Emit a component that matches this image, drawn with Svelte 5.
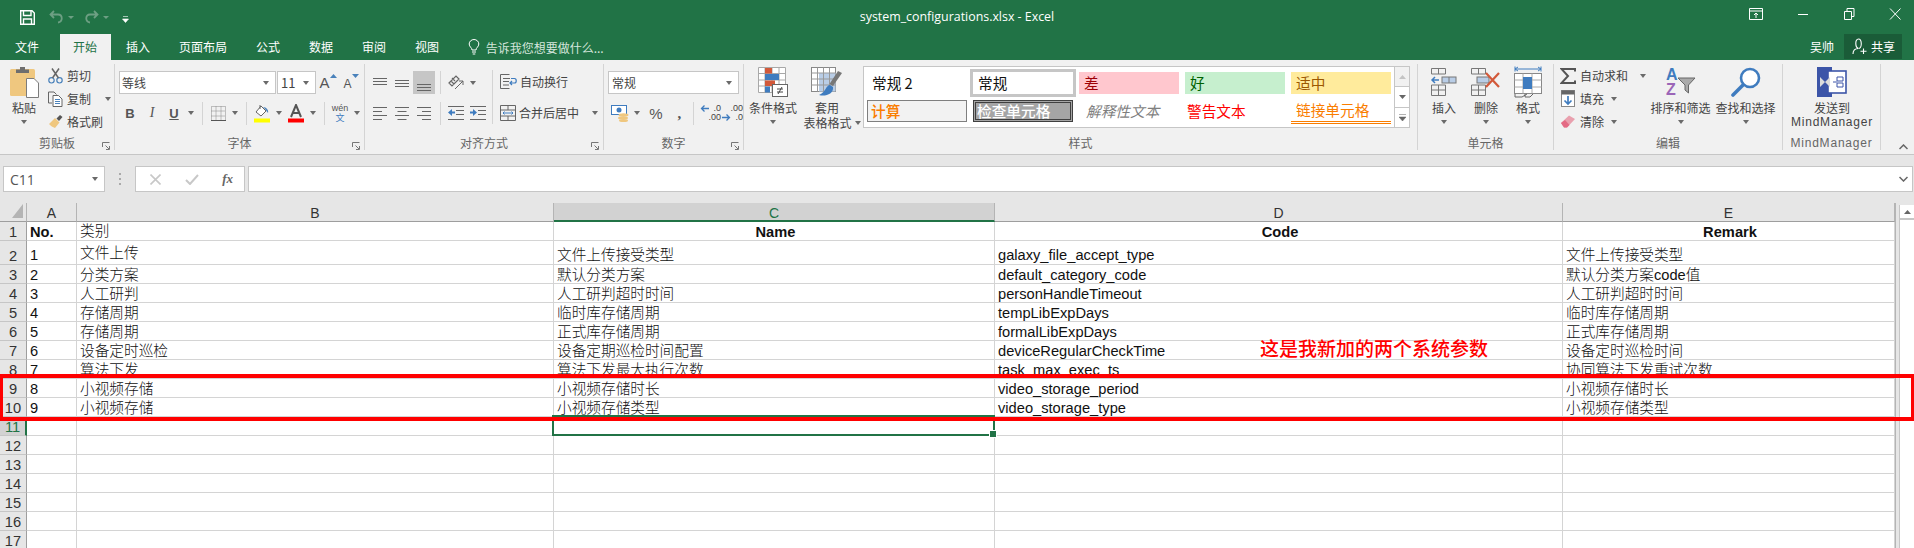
<script>
  const tabs = ["审阅", "视图"];
  const letters = ["A", "B", "C", "D", "E"];
  const rows = [
    ["No.", "类别", "Name", "Code", "Remark"],
    ["1", "文件上传", "文件上传接受类型", "galaxy_file_accept_type", "文件上传接受类型"],
    ["2", "分类方案", "默认分类方案", "default_category_code", "默认分类方案code值"],
    ["3", "人工研判", "人工研判超时时间", "personHandleTimeout", "人工研判超时时间"],
    ["4", "存储周期", "临时库存储周期", "tempLibExpDays", "临时库存储周期"],
    ["5", "存储周期", "正式库存储周期", "formalLibExpDays", "正式库存储周期"],
    ["6", "设备定时巡检", "设备定期巡检时间配置", "deviceRegularCheckTime", "设备定时巡检时间"],
    ["7", "算法下发", "算法下发最大执行次数", "task_max_exec_ts", "协同算法下发重试次数"],
    ["8", "小视频存储", "小视频存储时长", "video_storage_period", "小视频存储时长"],
    ["9", "小视频存储", "小视频存储类型", "video_storage_type", "小视频存储类型"],
    ["", "", "", "", ""],
    ["", "", "", "", ""],
    ["", "", "", "", ""],
    ["", "", "", "", ""],
    ["", "", "", "", ""],
    ["", "", "", "", ""],
    ["", "", "", "", ""]
  ];
</script>

{#snippet launcher()}
  <svg class="launcher" width="8" height="8" viewBox="0 0 8 8"><path d="M.5 5V.5H7.5M3.5 3.5L7 7M7.5 4V7.5H4" fill="none" stroke="#777"/></svg>
{/snippet}

<div class="app">
  <header class="titlebar">
    <div class="qat">
      <svg width="15" height="15" viewBox="0 0 15 15"><path d="M.7.7H12L14.3 3V14.3H.7Z" fill="none" stroke="#fff" stroke-width="1.4"/><path d="M3.5 1V5.5H11V1M3.5 14V9H11.5V14" fill="none" stroke="#fff" stroke-width="1.4"/></svg>
      <svg class="undo" width="15" height="14" viewBox="0 0 15 14"><path d="M5 1L1.5 4.5L5 8M2 4.5H9C14 4.5 14 12 9 12.5" fill="none" stroke="#6d9f83" stroke-width="1.8"/></svg>
      <span class="caret dim"></span>
      <svg class="redo" width="15" height="14" viewBox="0 0 15 14"><path d="M10 1L13.5 4.5L10 8M13 4.5H6C1 4.5 1 12 6 12.5" fill="none" stroke="#6d9f83" stroke-width="1.8"/></svg>
      <span class="caret dim"></span>
      <svg class="custom" width="7" height="7" viewBox="0 0 7 7"><path d="M1 .5H6M.5 3H6.5L3.5 6.5Z" fill="#fff" stroke="#fff" stroke-width=".6"/></svg>
    </div>
    <div class="doc-title">system_configurations.xlsx - Excel</div>
    <div class="winbtns">
      <svg class="first" width="14" height="12" viewBox="0 0 14 12"><path d="M.5.5H13.5V11.5H.5ZM.5 3H13.5M7 10V5M5 7L7 5L9 7" fill="none" stroke="#fff"/></svg>
      <svg width="20" height="12" viewBox="0 0 20 12"><path d="M5 6.5H15" stroke="#fff"/></svg>
      <svg width="20" height="12" viewBox="0 0 20 12"><path d="M5.5 3.5H12.5V11.5H5.5ZM8 3V.5H15V8.5H13" fill="none" stroke="#fff"/></svg>
      <svg width="20" height="12" viewBox="0 0 20 12"><path d="M5 .5L15.5 11.5M15.5 .5L5 11.5" stroke="#fff"/></svg>
    </div>
  </header>

  <nav class="tabbar">
    <span class="tab file">文件</span>
    <span class="tab active">开始</span>
    <span class="tab after">插入</span>
    <span class="tab">页面布局</span>
    <span class="tab">公式</span>
    <span class="tab">数据</span>
    {#each tabs as t}
      <span class="tab">{t}</span>
    {/each}
    <span class="tellme">
      <svg width="12" height="16" viewBox="0 0 12 16"><path d="M4 11C4 8.5 1.2 8 1.2 5A4.8 4.5 0 0 1 10.8 5C10.8 8 8 8.5 8 11ZM4 13H8M4.7 15H7.3" fill="none" stroke="#fff"/></svg>
      告诉我您想要做什么...
    </span>
    <span class="user">吴帅</span>
    <span class="share">
      <svg width="15" height="17" viewBox="0 0 15 17"><path d="M1 16C1 12 3 10.5 6.5 10.5C3 9.5 2.8 1 6.5 1C10 1 10.2 9.5 7 10.5M11.5 10.5V16M8.5 13.2H14.5" fill="none" stroke="#fff" stroke-width="1.1"/></svg>
      共享
    </span>
  </nav>

  <section class="ribbon">
    <div class="group g-clip">
      <div class="body">
        <div class="big paste">
          <div class="big-ico">
            <svg width="31" height="32" viewBox="0 0 31 32"><rect x="1" y="3" width="25" height="27" rx="1.5" fill="#efc77f"/><path d="M7 7V3.5H11V1H16V3.5H20V7Z" fill="#6e6e6e"/><path d="M17.5 12.5H25L29.5 17V31.5H17.5Z" fill="#fff" stroke="#7c7c7c"/></svg>
          </div>
          <span class="big-t">粘贴</span>
          <span class="caret big-c"></span>
        </div>
        <div class="stack">
          <div class="mini"><svg width="15" height="16" viewBox="0 0 15 16"><circle cx="3.5" cy="12.3" r="2.7" fill="none" stroke="#4a82bb" stroke-width="1.2"/><circle cx="11.5" cy="12.3" r="2.7" fill="none" stroke="#4a82bb" stroke-width="1.2"/><path d="M4.5 10L11 .5M10.5 10L4 .5" stroke="#666" stroke-width="1.5"/></svg><span>剪切</span></div>
          <div class="mini"><svg width="15" height="16" viewBox="0 0 15 16"><path d="M.5 1H6L8.5 3.5M.5 1V12H4" fill="none" stroke="#666"/><path d="M5 4.5H10.5L14 8V15.5H5Z" fill="#fff" stroke="#666"/><path d="M7 8.5H12M7 10.5H12M7 12.5H12" stroke="#4a82bb"/></svg><span>复制</span><span class="caret copy-c"></span></div>
          <div class="mini"><svg width="15" height="15" viewBox="0 0 15 15"><path d="M1 10L7 4L11.5 8.5L7 14C5 13 2.5 12 1 10Z" fill="#efc77f"/><path d="M8.5 4.5L12 1L14.5 3L11 7Z" fill="#555"/></svg><span>格式刷</span></div>
        </div>
      </div>
      <div class="glabel">剪贴板</div>
      {@render launcher()}
    </div>

    <div class="group g-font">
      <div class="line one">
        <div class="combo fname"><span class="grow">等线</span><span class="caret"></span></div>
        <div class="combo fsize"><span class="grow">11</span><span class="caret"></span></div>
        <span class="grow-a"><b>A</b><svg width="7" height="4" viewBox="0 0 7 4"><path d="M0 4L3.5 0L7 4Z" fill="#4a82bb"/></svg></span>
        <span class="grow-a small"><b>A</b><svg width="7" height="4" viewBox="0 0 7 4"><path d="M0 0L3.5 4L7 0Z" fill="#4a82bb"/></svg></span>
      </div>
      <div class="line two">
        <span class="ib bold">B</span>
        <span class="ib ital">I</span>
        <span class="ib under">U</span>
        <span class="cw"><span class="caret"></span></span>
        <i class="sep"></i>
        <span class="ib"><svg width="15" height="15" viewBox="0 0 15 15"><path d="M.5 .5H14.5V14.5H.5ZM5 .5V14.5M10 .5V14.5M.5 5H14.5M.5 10H14.5" fill="none" stroke="#888" stroke-dasharray="1 1"/><path d="M0 14.5H15" stroke="#555"/></svg></span>
        <span class="cw"><span class="caret"></span></span>
        <i class="sep"></i>
        <span class="ib"><svg width="16" height="19" viewBox="0 0 16 19"><path d="M2 8L7 2L12 7L7 12Z" fill="#fff" stroke="#666"/><path d="M6 1V5" stroke="#666"/><path d="M9 3C12 3 15 6 14 9L11 5Z" fill="#4a82bb"/><rect y="14.5" width="16" height="4" fill="#ffff00"/></svg></span>
        <span class="cw"><span class="caret"></span></span>
        <span class="ib"><svg width="16" height="19" viewBox="0 0 16 19"><path d="M3 13L8 1L13 13M5 9H11" fill="none" stroke="#555" stroke-width="2"/><rect y="14.5" width="16" height="4" fill="#ff0000"/></svg></span>
        <span class="cw"><span class="caret"></span></span>
        <i class="sep"></i>
        <span class="ib wen"><span>wén</span><em>文</em></span>
        <span class="cw"><span class="caret"></span></span>
      </div>
      <div class="glabel">字体</div>
      {@render launcher()}
    </div>

    <div class="group g-align">
      <div class="body">
        <div class="al-left">
          <div class="line one">
            <span class="ib"><svg width="14" height="10" viewBox="0 0 14 10"><path d="M0 .5H14M0 3.5H14M0 6.5H14" stroke="#666"/></svg></span>
            <span class="ib"><svg width="14" height="10" viewBox="0 0 14 10"><path d="M0 2.5H14M0 5.5H14M0 8.5H14" stroke="#666"/></svg></span>
            <span class="ib on"><svg width="14" height="9" viewBox="0 0 14 9"><path d="M0 2.5H14M0 5.5H14M0 8.5H14" stroke="#666"/></svg></span>
            <i class="sep"></i>
            <span class="ib"><svg width="17" height="16" viewBox="0 0 17 16"><path d="M1 8L8 1L11 4L4 11ZM3 6L6 9M4 3L7 6" fill="none" stroke="#666" stroke-width="1.2"/><path d="M7 14L15 6M11 6H15V10" fill="none" stroke="#666"/></svg></span>
            <span class="cw"><span class="caret"></span></span>
          </div>
          <div class="line two">
            <span class="ib"><svg width="14" height="13" viewBox="0 0 14 13"><path d="M0 .5H14M0 4.5H9M0 8.5H14M0 12.5H9" stroke="#666"/></svg></span>
            <span class="ib"><svg width="14" height="13" viewBox="0 0 14 13"><path d="M0 .5H14M2.500 4.500H11.500M0 8.500H14M2.500 12.500H11.500" stroke="#666"/></svg></span>
            <span class="ib"><svg width="14" height="13" viewBox="0 0 14 13"><path d="M0 .5H14M5 4.500H14M0 8.500H14M5 12.500H14" stroke="#666"/></svg></span>
            <i class="sep"></i>
            <span class="ib"><svg width="16" height="14" viewBox="0 0 16 14"><path d="M0 .5H16M8 4.500H16M8 8.500H16M0 13.500H16" stroke="#666"/><path d="M0 6.500L4 3V5.500H7V7.500H4V10Z" fill="#3f7cbf"/></svg></span>
            <span class="ib"><svg width="16" height="14" viewBox="0 0 16 14"><path d="M0 .5H16M8 4.500H16M8 8.500H16M0 13.500H16" stroke="#666"/><path d="M7 6.500L3 3V5.500H0V7.500H3V10Z" fill="#3f7cbf"/></svg></span>
          </div>
        </div>
        <i class="vsep"></i>
        <div class="al-right">
          <div class="mini wrap-row"><svg width="17" height="15" viewBox="0 0 17 15"><path d="M.5 .5H9.500M.5 .5V14.500H9.500M3 4.500H10M3 7.500H9M3 11H9" fill="none" stroke="#666"/><path d="M11 4.500H14.500C16.800 4.500 16.800 9 14.500 9H10M12 7L10 9L12 11" fill="none" stroke="#3f7cbf" stroke-width="1.200"/></svg><span>自动换行</span></div>
          <div class="mini wrap-row"><svg width="16" height="16" viewBox="0 0 16 16"><path d="M.5 .5H15.500V15.500H.5ZM.5 5H15.500M.5 11H15.500M8 .5V5M8 11V15.500" fill="none" stroke="#666"/><path d="M3 8H13M4.500 6.500L3 8L4.500 9.500M11.500 6.500L13 8L11.500 9.500" fill="none" stroke="#3f7cbf"/></svg><span>合并后居中</span><span class="caret merge-c"></span></div>
        </div>
      </div>
      <div class="glabel">对齐方式</div>
      {@render launcher()}
    </div>

    <div class="group g-num">
      <div class="line one"><div class="combo fnum"><span class="grow">常规</span><span class="caret"></span></div></div>
      <div class="line two numrow">
        <span class="curr"><svg width="19" height="17" viewBox="0 0 19 17"><rect x=".5" y=".5" width="15" height="9" fill="#fff" stroke="#3f7cbf"/><circle cx="8" cy="5" r="2.500" fill="#3f7cbf"/><ellipse cx="12.500" cy="10" rx="5" ry="1.700" fill="#efc77f"/><ellipse cx="12" cy="13" rx="5" ry="1.700" fill="#efc77f"/><ellipse cx="12.500" cy="15.500" rx="4.500" ry="1.500" fill="#efc77f"/></svg></span>
        <span class="caret"></span>
        <span class="pct">%</span>
        <span class="comma">,</span>
        <i class="sep"></i>
        <span class="dec"><svg width="9" height="7" viewBox="0 0 9 7"><path d="M9 3.500H2M4.500 .5L1.500 3.500L4.500 6.500" fill="none" stroke="#3f7cbf" stroke-width="1.300"/></svg><b>.0</b><b class="full">.00</b></span>
        <span class="dec"><b class="full">.00</b><svg width="9" height="7" viewBox="0 0 9 7"><path d="M0 3.500H7M4.500 .5L7.500 3.500L4.500 6.500" fill="none" stroke="#3f7cbf" stroke-width="1.300"/></svg><b>.0</b></span>
      </div>
      <div class="glabel">数字</div>
      {@render launcher()}
    </div>

    <div class="group g-styles">
      <div class="body">
        <div class="big cond">
          <div class="big-ico">
            <svg width="30" height="30" viewBox="0 0 30 30"><path d="M.5 .5H27.500V25.500H.5ZM7 .5V25.500M14 .5V25.500M21 .5V25.500M.5 6.500H27.500M.5 13H27.500M.5 19H27.500" fill="#fff" stroke="#a8a8a8"/><rect x="7" y="1" width="7" height="5.500" fill="#d2593a"/><rect x="7" y="7" width="14" height="6" fill="#3f7cbf"/><rect x="7" y="13.500" width="10" height="5.500" fill="#d2593a"/><rect x="7" y="19.500" width="5" height="6" fill="#3f7cbf"/><rect x="14.500" y="17.500" width="15" height="12" fill="#fff" stroke="#666"/><path d="M19 22H25M19 25H25M24 20L20 27" stroke="#444"/></svg>
          </div>
          <span class="big-t">条件格式</span>
          <span class="caret big-c"></span>
        </div>
        <div class="big tablefmt">
          <div class="big-ico">
            <svg width="32" height="30" viewBox="0 0 32 30"><rect x=".5" y=".5" width="24" height="24" fill="#fff" stroke="#888"/><rect x="8" y="6" width="16.500" height="18.500" fill="#b9cde6"/><path d="M.5 6H24.500M.5 12H24.500M.5 18H24.500M6.500 .5V24.500M12.500 .5V24.500M18.500 .5V24.500" stroke="#999" fill="none"/><path d="M31 6L22 19L18.500 17L27 4Z" fill="#777"/><path d="M19 18C15 18 15 25 8 28C14 30 23 27 22 20Z" fill="#3f7cbf"/></svg>
          </div>
          <span class="big-t">套用</span>
          <span class="big-t two-l">表格格式<span class="caret"></span></span>
        </div>
        <div class="gallery">
          <div class="cells">
            <div class="st">常规 2</div>
            <div class="st sel-st">常规</div>
            <div class="st"><span class="fill bad">差</span></div>
            <div class="st"><span class="fill good">好</span></div>
            <div class="st"><span class="fill neutral">适中</span></div>
            <div class="st"><span class="fill calc">计算</span></div>
            <div class="st"><span class="fill check">检查单元格</span></div>
            <div class="st"><span class="fill expl">解释性文本</span></div>
            <div class="st"><span class="fill warn">警告文本</span></div>
            <div class="st"><span class="fill link">链接单元格</span></div>
          </div>
          <div class="gal-scroll">
            <span class="gs dis"><svg width="7" height="4" viewBox="0 0 7 4"><path d="M0 4L3.500 0L7 4Z" fill="#c4c4c4"/></svg></span>
            <span class="gs"><svg width="7" height="4" viewBox="0 0 7 4"><path d="M0 0L3.500 4L7 0Z" fill="#666"/></svg></span>
            <span class="gs"><svg width="7" height="7" viewBox="0 0 7 7"><path d="M0 .5H7M0 3H7L3.500 7Z" fill="#666" stroke="#666" stroke-width=".5"/></svg></span>
          </div>
        </div>
      </div>
      <div class="glabel">样式</div>
    </div>

    <div class="group g-cells">
      <div class="body">
        <div class="big cellb">
          <div class="big-ico">
            <svg width="26" height="28" viewBox="0 0 26 28"><path d="M.5 .5H14.500V6H.5ZM7.500 .5V6M.5 17H14.500V27.500H.5ZM7.500 17V27.500M.5 22H14.500" fill="none" stroke="#777"/><rect x="11" y="9" width="14" height="6" fill="#b9cde6" stroke="#777"/><path d="M18 9V15" stroke="#777"/><path d="M.5 12H8M4 9L1 12L4 15" fill="none" stroke="#3f7cbf" stroke-width="1.500"/></svg>
          </div>
          <span class="big-t">插入</span>
          <span class="caret big-c"></span>
        </div>
        <div class="big cellb">
          <div class="big-ico">
            <svg width="30" height="28" viewBox="0 0 30 28"><path d="M.5 .5H14.500V6H.5ZM7.500 .5V6M.5 17H14.500V27.500H.5ZM7.500 17V27.500M.5 22H14.500" fill="none" stroke="#777"/><rect x="6" y="9" width="12" height="6" fill="#b9cde6" stroke="#777"/><path d="M15 5L28 19M28 5L15 19" stroke="#d2593a" stroke-width="2.200"/></svg>
          </div>
          <span class="big-t">删除</span>
          <span class="caret big-c"></span>
        </div>
        <div class="big cellb">
          <div class="big-ico">
            <svg width="28" height="33" viewBox="0 0 28 33"><path d="M1 3H27M1 .5V5.500M27 .5V5.500M1 3L4 1M1 3L4 5M27 3L24 1M27 3L24 5" fill="none" stroke="#3f7cbf"/><rect x=".5" y="7.500" width="27" height="20" fill="#fff" stroke="#888"/><path d="M9 7.500V27.500M18 7.500V27.500M.5 14H27.500M.5 21H27.500" stroke="#aaa"/><rect x="9" y="11" width="9" height="12" fill="#3f7cbf"/><path d="M1 28V31H8L13 28M11 28V31H16L19 28" fill="none" stroke="#666"/></svg>
          </div>
          <span class="big-t">格式</span>
          <span class="caret big-c"></span>
        </div>
      </div>
      <div class="glabel">单元格</div>
    </div>

    <div class="group g-edit">
      <div class="body">
        <div class="stack edit-stack">
          <div class="mini"><svg width="16" height="16" viewBox="0 0 16 16"><path d="M15 3.500V1H1.500L8 8L1.500 15H15V12.500" fill="none" stroke="#555" stroke-width="2"/></svg><span>自动求和</span><span class="caret sum-c"></span></div>
          <div class="mini"><svg width="16" height="17" viewBox="0 0 16 17"><rect x="1.500" y=".5" width="13" height="16" fill="#fff" stroke="#888"/><rect x="1.500" y=".5" width="13" height="4" fill="#666"/><path d="M8 6V14M4.500 10.500L8 14L11.500 10.500" fill="none" stroke="#3f7cbf" stroke-width="1.700"/></svg><span>填充</span><span class="caret small-c"></span></div>
          <div class="mini"><svg width="16" height="15" viewBox="0 0 16 15"><path d="M1 9L9 1.500L15 5L7 13.500H4Z" fill="#e9a0ae"/><path d="M1 9L4 13.500H7L9.500 11L5 6Z" fill="#e46a84"/></svg><span>清除</span><span class="caret small-c"></span></div>
        </div>
        <div class="big editb">
          <div class="big-ico">
            <svg width="31" height="29" viewBox="0 0 31 29"><text x="1" y="12" class="az blue">A</text><text x="1" y="27" class="az purple">Z</text><path d="M13 10H30L23.500 17V25L20 22V17Z" fill="#aaa" stroke="#666"/></svg>
          </div>
          <span class="big-t">排序和筛选</span>
          <span class="caret big-c"></span>
        </div>
        <div class="big editb">
          <div class="big-ico">
            <svg width="30" height="30" viewBox="0 0 30 30"><circle cx="19" cy="11" r="9" fill="#fff" stroke="#3f7cbf" stroke-width="2.600"/><path d="M12 18L2 28" stroke="#3f7cbf" stroke-width="3.600" stroke-linecap="round"/></svg>
          </div>
          <span class="big-t">查找和选择</span>
          <span class="caret big-c"></span>
        </div>
      </div>
      <div class="glabel">编辑</div>
    </div>

    <div class="group g-mm">
      <div class="big mmb">
        <div class="big-ico">
          <svg width="30" height="30" viewBox="0 0 30 30"><rect x="0" y="0" width="15" height="30" fill="#3c55a8"/><rect x="11" y="4" width="18" height="22" fill="#fff" stroke="#3c55a8" stroke-width="1.600"/><path d="M3 10L8 15L3 20ZM13 10L8 15L13 20Z" fill="#dcdcdc"/><path d="M16 15H20M20 10H26V14H20ZM20 16H26V20H20Z" fill="none" stroke="#3c55a8"/></svg>
        </div>
        <span class="big-t">发送到</span>
        <span class="big-t mm-t">MindManager</span>
      </div>
      <div class="glabel mm-t">MindManager</div>
    </div>
    <svg class="collapse" width="9" height="6" viewBox="0 0 9 6"><path d="M.5 5L4.500 1L8.500 5" fill="none" stroke="#666" stroke-width="1.500"/></svg>
  </section>

  <section class="fbar">
    <div class="namebox"><span class="grow">C11</span><span class="caret"></span></div>
    <div class="dots"><i></i><i></i><i></i></div>
    <div class="fnbox">
      <svg width="11" height="11" viewBox="0 0 11 11"><path d="M.5 .5L10.500 10.500M10.500 .5L.5 10.500" stroke="#c8c8c8" stroke-width="1.600"/></svg>
      <svg width="14" height="11" viewBox="0 0 14 11"><path d="M1 6L5 10L13 1" fill="none" stroke="#c8c8c8" stroke-width="2"/></svg>
      <span class="fx">fx</span>
    </div>
    <div class="input"><svg width="9" height="6" viewBox="0 0 9 6"><path d="M.5 1L4.500 5L8.500 1" fill="none" stroke="#666" stroke-width="1.500"/></svg></div>
  </section>

  <section class="sheet">
    <div class="table">
      <div class="row head">
        <div class="corner"><svg width="11" height="14" viewBox="0 0 11 14"><path d="M11 0V14H0Z" fill="#b4b4b4"/></svg></div>
        {#each letters as l}
          <div class="ch" class:cur={l === "C"}>{l}</div>
        {/each}
      </div>
      {#each rows as r, i}
        <div class="row" class:tall={i === 1}>
          <div class="rh" class:cur={i === 10}>{i + 1}</div>
          {#each r as v, j}
            <div
              class="c"
              class:strong={i === 0 && j !== 1}
              class:mid={i === 0 && j > 1}
              class:raised={(i === 0 || i === 1) && j === 1}
              class:sel={i === 10 && j === 2}
            >{v}</div>
          {/each}
        </div>
      {/each}
    </div>
    <div class="vscroll">
      <div class="vs-track">
        <span class="vs-up"><svg width="7" height="4" viewBox="0 0 7 4"><path d="M0 4L3.500 0L7 4Z" fill="#666"/></svg></span>
      </div>
    </div>
  </section>

  <div class="redbox"></div>
  <div class="note">这是我新加的两个系统参数</div>
</div>

<style>
  :global(body) {
    margin: 0;
    background: #fff;
  }
  * {
    box-sizing: border-box;
  }
  .app {
    position: relative;
    width: 1914px;
    height: 548px;
    overflow: hidden;
    display: flex;
    flex-direction: column;
    font-family: "Noto Sans CJK SC", "Liberation Sans", sans-serif;
    font-size: 12px;
    color: #444;
  }
  .caret {
    display: inline-block;
    width: 0;
    height: 0;
    flex: none;
    border-left: 3.5px solid transparent;
    border-right: 3.5px solid transparent;
    border-top: 4px solid #6a6a6a;
  }
  .caret.dim {
    border-left-width: 3px;
    border-right-width: 3px;
    border-top: 3px solid #6d9f83;
    margin-left: 4px;
  }

  /* title + tabs */
  .titlebar {
    height: 34px;
    background: #217346;
    display: grid;
    grid-template-columns: 1fr auto 1fr;
    align-items: center;
    color: #fff;
  }
  .qat {
    display: flex;
    align-items: center;
    padding-left: 20px;
    height: 28px;
  }
  .undo {
    margin-left: 14px;
  }
  .redo {
    margin-left: 10px;
  }
  .custom {
    margin-left: 13px;
    margin-top: 4px;
  }
  .doc-title {
    font-family: "Open Sans", sans-serif;
    font-size: 12.4px;
    margin-top: -2px;
  }
  .winbtns {
    display: flex;
    justify-content: flex-end;
    align-items: center;
    gap: 26px;
    padding: 0 9px 6px 0;
  }
  .winbtns .first {
    margin-right: 4px;
  }
  .tabbar {
    height: 26px;
    background: #217346;
    display: flex;
    align-items: stretch;
    color: #fff;
    line-height: 25px;
  }
  .tab {
    padding: 0 14.5px;
  }
  .tab.file {
    padding: 0 21px 0 15px;
  }
  .tab.active {
    background: #f1f1f1;
    color: #217346;
    padding: 0 14px 0 13px;
  }
  .tab.after {
    padding-left: 15px;
  }
  .tellme {
    display: flex;
    align-items: center;
    gap: 6px;
    margin-left: 14px;
    color: #d5e6dc;
  }
  .user {
    margin-left: auto;
  }
  .share {
    display: flex;
    align-items: center;
    gap: 4px;
    width: 58px;
    height: 25px;
    margin: 0 12px 0 10px;
    padding-left: 8px;
    background: #1a5c38;
  }

  /* ribbon */
  .ribbon {
    position: relative;
    height: 95px;
    flex: none;
    padding-top: 4px;
    background: #f1f1f1;
    border-bottom: 1px solid #c6c6c6;
    display: flex;
    align-items: flex-start;
  }
  .group {
    position: relative;
    height: 86px;
    flex: none;
    display: flex;
    flex-direction: column;
    border-right: 1px solid #d4d4d4;
  }
  .body {
    display: flex;
    height: 72px;
  }
  .glabel {
    position: absolute;
    left: 0;
    right: 0;
    bottom: 0;
    text-align: center;
    line-height: 14px;
    color: #666;
  }
  .launcher {
    position: absolute;
    right: 4px;
    bottom: 0;
  }
  .g-clip { width: 115px; }
  .g-font { width: 250px; padding-left: 4px; }
  .g-align { width: 239px; }
  .g-num { width: 140px; padding-left: 4px; }
  .g-styles { width: 674px; }
  .g-cells { width: 136px; }
  .g-edit { width: 229px; }
  .g-mm { width: 98px; }
  .big {
    display: flex;
    flex-direction: column;
    align-items: center;
    flex: none;
    color: #444;
  }
  .big-ico {
    height: 36px;
    display: flex;
    align-items: center;
    justify-content: center;
  }
  .big-t {
    line-height: 15px;
    white-space: nowrap;
  }
  .big-c {
    margin-top: 5px;
  }
  .paste {
    width: 48px;
  }
  .stack {
    display: flex;
    flex-direction: column;
  }
  .mini {
    height: 23px;
    display: flex;
    align-items: center;
    gap: 4px;
    white-space: nowrap;
  }
  .copy-c {
    margin-left: 10px;
  }
  .line {
    display: flex;
    align-items: center;
  }
  .line.one {
    height: 23px;
    margin-top: 7px;
  }
  .line.two {
    height: 24px;
    margin-top: 7px;
  }
  .combo {
    height: 23px;
    background: #fff;
    border: 1px solid #c6c6c6;
    display: flex;
    align-items: center;
    padding: 0 6px 0 2px;
  }
  .grow {
    flex: 1;
  }
  .fname { width: 157px; }
  .fsize { width: 39px; margin-left: 1px; padding-left: 3px; font-size: 13px; }
  .fnum { width: 131px; padding-left: 3px; }
  .grow-a {
    width: 22px;
    margin-left: 1px;
    display: flex;
    justify-content: center;
    align-items: flex-start;
  }
  .grow-a b {
    font: 400 15px "Liberation Sans", sans-serif;
    color: #555;
  }
  .grow-a.small b {
    font-size: 12px;
    margin-top: 3px;
  }
  .ib {
    width: 22px;
    height: 23px;
    flex: none;
    display: flex;
    align-items: center;
    justify-content: center;
    font: 700 13px "Liberation Sans", sans-serif;
    color: #555;
  }
  .ital {
    font-style: italic;
    font-family: "Liberation Serif", serif;
    font-weight: 400;
    font-size: 14px;
  }
  .under {
    text-decoration: underline;
  }
  .cw {
    width: 12px;
    flex: none;
    display: flex;
    justify-content: center;
  }
  .sep {
    width: 1px;
    height: 23px;
    flex: none;
    margin: 0 4px 0 5px;
    background: #d4d4d4;
  }
  .wen {
    flex-direction: column;
    font: 400 9px/9px "Liberation Sans", sans-serif;
  }
  .wen em {
    font: 400 9px/10px "Noto Sans CJK SC", sans-serif;
    color: #3f7cbf;
  }
  .al-left {
    padding-left: 4px;
    width: 127px;
  }
  .on {
    background: #c6c6c6;
    align-items: flex-end;
    padding-bottom: 3px;
  }
  .vsep {
    width: 1px;
    height: 54px;
    margin-top: 6px;
    background: #d4d4d4;
  }
  .al-right {
    padding: 6px 0 0 7px;
    display: flex;
    flex-direction: column;
    gap: 8px;
  }
  .wrap-row {
    gap: 3px;
  }
  .merge-c {
    margin-left: 10px;
  }
  .numrow {
    padding-left: 3px;
  }
  .curr {
    width: 24px;
    display: flex;
  }
  .pct {
    width: 18px;
    margin-left: 9px;
    font: 400 15px "Liberation Sans", sans-serif;
    color: #555;
  }
  .comma {
    width: 22px;
    margin-left: 2px;
    text-align: center;
    font: 700 15px/14px "Liberation Serif", serif;
    color: #555;
  }
  .numrow .sep {
    margin: 0 5px 0 3px;
  }
  .dec {
    width: 22px;
    display: grid;
    grid-template-columns: 10px 12px;
    align-items: center;
    justify-items: end;
    font: 400 9px/9px "Liberation Sans", sans-serif;
    color: #444;
  }
  .dec b {
    font-weight: 400;
  }
  .dec .full {
    grid-column: 1 / 3;
  }
  .cond {
    width: 54px;
    margin-left: 2px;
  }
  .tablefmt {
    width: 52px;
    margin-left: 1px;
  }
  .two-l {
    display: flex;
    align-items: center;
    gap: 3px;
    margin-left: 10px;
  }
  .gallery {
    width: 547px;
    height: 62px;
    margin: 2px 0 0 10px;
    background: #fff;
    border: 1px solid #c6c6c6;
    display: flex;
  }
  .cells {
    width: 530px;
    display: grid;
    grid-template-columns: repeat(5, 106px);
    grid-template-rows: 28px 28px;
    padding-top: 2px;
  }
  .st {
    padding: 3px;
    line-height: 21px;
    font-size: 14.67px;
    color: #111;
    white-space: nowrap;
    padding-left: 8px;
  }
  .st:has(.fill) {
    padding-left: 3px;
  }
  .fill {
    display: block;
    height: 22px;
    padding-left: 5px;
  }
  .sel-st {
    border: 3px solid #c6c6c6;
    padding: 0 0 0 5px;
  }
  .bad { background: #ffc7ce; color: #9c0006; }
  .good { background: #c6efce; color: #006100; }
  .neutral { background: #ffeb9c; color: #9c5700; }
  .calc { background: #f2f2f2; color: #fa7d00; border: 1px solid #7f7f7f; padding-left: 3px; font-weight: 500; line-height: 20px; }
  .check { background: #a5a5a5; color: #fff; border: 3px double #3f3f3f; padding-left: 1px; font-weight: 500; line-height: 16px; }
  .expl { color: #7f7f7f; font-style: italic; padding-left: 7px; }
  .warn { color: #ff0000; padding-left: 2px; }
  .link { color: #fa7d00; border-bottom: 3px double #fa7d00; padding-left: 5px; line-height: 20px; height: 24px; }
  .gal-scroll {
    flex: 1;
    display: flex;
    flex-direction: column;
    border-left: 1px solid #c6c6c6;
  }
  .gs {
    flex: 1;
    display: flex;
    align-items: center;
    justify-content: center;
    background: #fff;
  }
  .gs + .gs {
    border-top: 1px solid #c6c6c6;
  }
  .gs.dis {
    background: #f1f1f1;
  }
  .cellb {
    width: 42px;
  }
  .cellb:first-child {
    margin-left: 5px;
  }
  .edit-stack {
    width: 94px;
    padding-left: 6px;
  }
  .sum-c {
    margin-left: 8px;
  }
  .small-c {
    margin-left: 3px;
  }
  .editb {
    width: 65px;
  }
  .az {
    font: 700 16px "Liberation Sans", sans-serif;
  }
  .blue { fill: #3f7cbf; }
  .purple { fill: #9b65b7; }
  .mmb {
    width: 98px;
  }
  .mm-t {
    font-family: "Liberation Sans", sans-serif;
    letter-spacing: .8px;
  }
  .collapse {
    position: absolute;
    right: 6px;
    bottom: 4px;
  }

  /* formula bar */
  .fbar {
    height: 48px;
    flex: none;
    background: #e6e6e6;
    display: flex;
    padding: 11px 1px 11px 3px;
  }
  .namebox {
    width: 102px;
    display: flex;
    align-items: center;
    background: #fff;
    border: 1px solid #c6c6c6;
    padding: 0 6px 0 6px;
    font: 400 14px "Open Sans", sans-serif;
    color: #555;
  }
  .dots {
    width: 30px;
    display: flex;
    flex-direction: column;
    align-items: center;
    justify-content: center;
    gap: 3px;
  }
  .dots i {
    width: 2px;
    height: 2px;
    background: #aaa;
  }
  .fnbox {
    width: 110px;
    display: flex;
    align-items: center;
    justify-content: space-between;
    padding: 0 11px 0 14px;
    background: #fff;
    border: 1px solid #c6c6c6;
  }
  .fx {
    font: italic 700 13px "Liberation Serif", serif;
    color: #666;
  }
  .input {
    flex: 1;
    margin-left: 3px;
    background: #fff;
    border: 1px solid #c6c6c6;
    display: flex;
    align-items: center;
    justify-content: flex-end;
    padding-right: 4px;
  }

  /* sheet */
  .sheet {
    flex: 1;
    min-height: 0;
    display: flex;
    overflow: hidden;
  }
  .table {
    width: 1896px;
    flex: none;
    border-right: 1px solid #b4b4b4;
  }
  .row {
    display: grid;
    grid-template-columns: 27px 50px 477px 441px 568px 332px;
    grid-template-rows: 100%;
    height: 19px;
  }
  .row.tall {
    height: 24px;
  }
  .corner,
  .ch,
  .rh {
    height: 100%;
    background: #e6e6e6;
    color: #333;
    font: 400 14px/20px "Liberation Sans", sans-serif;
    text-align: center;
    border-right: 1px solid #b4b4b4;
    border-bottom: 1px solid #9e9e9e;
  }
  .corner {
    display: flex;
    justify-content: flex-end;
    padding: 1px 3px 0 0;
    background: #e6e6e6;
  }
  .ch.cur {
    background: #d2d2d2;
    color: #217346;
    border-bottom: 2px solid #217346;
  }
  .rh {
    border-right: 1px solid #9e9e9e;
    border-bottom: 1px solid #c6c6c6;
    font-size: 14.67px;
  }
  .tall .rh {
    line-height: 31px;
  }
  .rh.cur {
    background: #d2d2d2;
    color: #217346;
    border-right: 2px solid #217346;
  }
  .c {
    position: relative;
    height: 100%;
    padding: 1px 0 0 3px;
    border-right: 1px solid #d4d4d4;
    border-bottom: 1px solid #d4d4d4;
    font: 300 14.67px/19px "Liberation Sans", "Noto Sans CJK SC", sans-serif;
    color: #111;
    white-space: nowrap;
  }
  .tall .c {
    padding-top: 5px;
  }
  .strong {
    font-weight: 700;
  }
  .mid {
    text-align: center;
  }
  .c.raised {
    line-height: 18px;
    padding-top: 0;
  }
  .tall .c.raised {
    padding-top: 3px;
  }
  .sel::after {
    content: "";
    position: absolute;
    inset: -2px -1px -1px -2px;
    border: 2px solid #217346;
  }
  .sel::before {
    content: "";
    position: absolute;
    right: -3px;
    bottom: -3px;
    width: 6px;
    height: 6px;
    background: #217346;
    border: 1px solid #fff;
    z-index: 1;
  }
  .vscroll {
    flex: 1;
    padding: 2px 0 0 3px;
    background: #e6e6e6;
  }
  .vs-track {
    height: 100%;
    background: #fff;
    border-left: 1px solid #c6c6c6;
  }
  .vs-up {
    display: flex;
    align-items: center;
    justify-content: center;
    height: 15px;
    border-bottom: 2px solid #c6c6c6;
  }

  /* annotations on the screenshot */
  .redbox {
    position: absolute;
    left: 0;
    top: 374px;
    width: 1914px;
    height: 47px;
    border: solid #ff0000;
    border-width: 4px 3px 4px 3px;
  }
  .note {
    position: absolute;
    left: 1260px;
    top: 336px;
    font: 500 19px/24px "Noto Sans CJK SC", sans-serif;
    color: #ff0000;
  }
</style>
